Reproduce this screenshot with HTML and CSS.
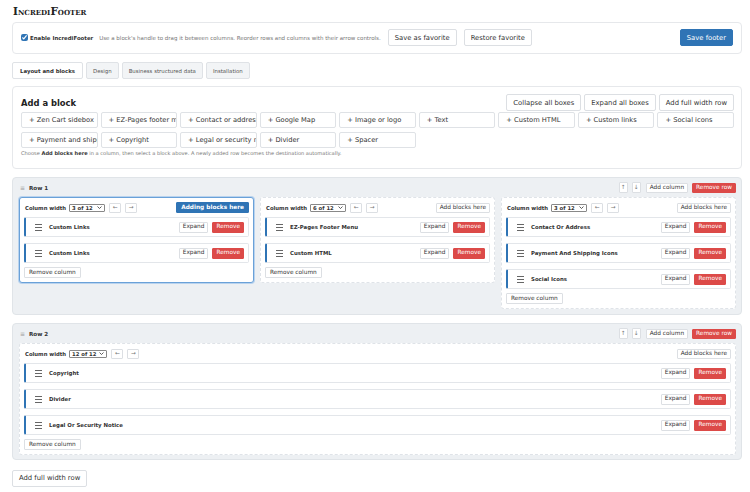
FILE: index.html
```html
<!DOCTYPE html>
<html lang="en">
<head>
  <meta charset="UTF-8">
  <meta name="viewport" content="width=device-width, initial-scale=1.0">
  <title>IncrediFooter</title>
  <link rel="stylesheet" href="styles.css">
</head>
<body>
  <h1 class="title">IncrediFooter</h1>

  <div class="panel toolbar">
    <label class="enable"><input type="checkbox" checked> Enable IncrediFooter</label>
    <span class="hint">Use a block's handle to drag it between columns. Reorder rows and columns with their arrow controls.</span>
    <button class="btn">Save as favorite</button>
    <button class="btn">Restore favorite</button>
    <button class="btn btn-primary push">Save footer</button>
  </div>

  <div class="tabs">
    <button class="tab active">Layout and blocks</button>
    <button class="tab">Design</button>
    <button class="tab">Business structured data</button>
    <button class="tab">Installation</button>
  </div>

  <div class="panel add-panel">
    <div class="add-head">
      <h2>Add a block</h2>
      <div class="actions">
        <button class="btn">Collapse all boxes</button>
        <button class="btn">Expand all boxes</button>
        <button class="btn">Add full width row</button>
      </div>
    </div>
    <div class="block-grid">
      <button class="pick">+ Zen Cart sidebox</button>
      <button class="pick">+ EZ-Pages footer menu</button>
      <button class="pick">+ Contact or address</button>
      <button class="pick">+ Google Map</button>
      <button class="pick">+ Image or logo</button>
      <button class="pick">+ Text</button>
      <button class="pick">+ Custom HTML</button>
      <button class="pick">+ Custom links</button>
      <button class="pick">+ Social icons</button>
      <button class="pick">+ Payment and shipping icons</button>
      <button class="pick">+ Copyright</button>
      <button class="pick">+ Legal or security notice</button>
      <button class="pick">+ Divider</button>
      <button class="pick">+ Spacer</button>
    </div>
    <p class="help">Choose <b>Add blocks here</b> in a column, then select a block above. A newly added row becomes the destination automatically.</p>
  </div>

  <!-- Row 1 -->
  <div class="row-box">
    <div class="row-head">
      <span class="grip">&#8801;</span>
      <b>Row 1</b>
      <div class="row-tools">
        <button class="mini arrow">&uarr;</button>
        <button class="mini arrow">&darr;</button>
        <button class="mini">Add column</button>
        <button class="mini mini-danger">Remove row</button>
      </div>
    </div>
    <div class="cols cols-3">
      <div class="col active">
        <div class="col-head">
          <b>Column width</b>
          <span class="select">3 of 12 <svg width="5" height="3" viewBox="0 0 5 3"><path d="M0.5 0.5 L2.5 2.5 L4.5 0.5" fill="none" stroke="#333" stroke-width="0.8"/></svg></span>
          <button class="mini arrow">&larr;</button>
          <button class="mini arrow">&rarr;</button>
          <button class="mini mini-primary push">Adding blocks here</button>
        </div>
        <div class="block">
          <svg class="handle" width="7" height="7" viewBox="0 0 7 7"><path d="M0 0.5H7M0 3.5H7M0 6.5H7" stroke="#666" stroke-width="1"/></svg>
          <b>Custom Links</b>
          <button class="mini push">Expand</button>
          <button class="mini mini-danger">Remove</button>
        </div>
        <div class="block">
          <svg class="handle" width="7" height="7" viewBox="0 0 7 7"><path d="M0 0.5H7M0 3.5H7M0 6.5H7" stroke="#666" stroke-width="1"/></svg>
          <b>Custom Links</b>
          <button class="mini push">Expand</button>
          <button class="mini mini-danger">Remove</button>
        </div>
        <button class="mini remove-col">Remove column</button>
      </div>

      <div class="col">
        <div class="col-head">
          <b>Column width</b>
          <span class="select">6 of 12 <svg width="5" height="3" viewBox="0 0 5 3"><path d="M0.5 0.5 L2.5 2.5 L4.5 0.5" fill="none" stroke="#333" stroke-width="0.8"/></svg></span>
          <button class="mini arrow">&larr;</button>
          <button class="mini arrow">&rarr;</button>
          <button class="mini push">Add blocks here</button>
        </div>
        <div class="block">
          <svg class="handle" width="7" height="7" viewBox="0 0 7 7"><path d="M0 0.5H7M0 3.5H7M0 6.5H7" stroke="#666" stroke-width="1"/></svg>
          <b>EZ-Pages Footer Menu</b>
          <button class="mini push">Expand</button>
          <button class="mini mini-danger">Remove</button>
        </div>
        <div class="block">
          <svg class="handle" width="7" height="7" viewBox="0 0 7 7"><path d="M0 0.5H7M0 3.5H7M0 6.5H7" stroke="#666" stroke-width="1"/></svg>
          <b>Custom HTML</b>
          <button class="mini push">Expand</button>
          <button class="mini mini-danger">Remove</button>
        </div>
        <button class="mini remove-col">Remove column</button>
      </div>

      <div class="col">
        <div class="col-head">
          <b>Column width</b>
          <span class="select">3 of 12 <svg width="5" height="3" viewBox="0 0 5 3"><path d="M0.5 0.5 L2.5 2.5 L4.5 0.5" fill="none" stroke="#333" stroke-width="0.8"/></svg></span>
          <button class="mini arrow">&larr;</button>
          <button class="mini arrow">&rarr;</button>
          <button class="mini push">Add blocks here</button>
        </div>
        <div class="block">
          <svg class="handle" width="7" height="7" viewBox="0 0 7 7"><path d="M0 0.5H7M0 3.5H7M0 6.5H7" stroke="#666" stroke-width="1"/></svg>
          <b>Contact Or Address</b>
          <button class="mini push">Expand</button>
          <button class="mini mini-danger">Remove</button>
        </div>
        <div class="block">
          <svg class="handle" width="7" height="7" viewBox="0 0 7 7"><path d="M0 0.5H7M0 3.5H7M0 6.5H7" stroke="#666" stroke-width="1"/></svg>
          <b>Payment And Shipping Icons</b>
          <button class="mini push">Expand</button>
          <button class="mini mini-danger">Remove</button>
        </div>
        <div class="block">
          <svg class="handle" width="7" height="7" viewBox="0 0 7 7"><path d="M0 0.5H7M0 3.5H7M0 6.5H7" stroke="#666" stroke-width="1"/></svg>
          <b>Social Icons</b>
          <button class="mini push">Expand</button>
          <button class="mini mini-danger">Remove</button>
        </div>
        <button class="mini remove-col">Remove column</button>
      </div>
    </div>
  </div>

  <!-- Row 2 -->
  <div class="row-box">
    <div class="row-head">
      <span class="grip">&#8801;</span>
      <b>Row 2</b>
      <div class="row-tools">
        <button class="mini arrow">&uarr;</button>
        <button class="mini arrow">&darr;</button>
        <button class="mini">Add column</button>
        <button class="mini mini-danger">Remove row</button>
      </div>
    </div>
    <div class="cols">
      <div class="col">
        <div class="col-head">
          <b>Column width</b>
          <span class="select">12 of 12 <svg width="5" height="3" viewBox="0 0 5 3"><path d="M0.5 0.5 L2.5 2.5 L4.5 0.5" fill="none" stroke="#333" stroke-width="0.8"/></svg></span>
          <button class="mini arrow">&larr;</button>
          <button class="mini arrow">&rarr;</button>
          <button class="mini push">Add blocks here</button>
        </div>
        <div class="block">
          <svg class="handle" width="7" height="7" viewBox="0 0 7 7"><path d="M0 0.5H7M0 3.5H7M0 6.5H7" stroke="#666" stroke-width="1"/></svg>
          <b>Copyright</b>
          <button class="mini push">Expand</button>
          <button class="mini mini-danger">Remove</button>
        </div>
        <div class="block">
          <svg class="handle" width="7" height="7" viewBox="0 0 7 7"><path d="M0 0.5H7M0 3.5H7M0 6.5H7" stroke="#666" stroke-width="1"/></svg>
          <b>Divider</b>
          <button class="mini push">Expand</button>
          <button class="mini mini-danger">Remove</button>
        </div>
        <div class="block">
          <svg class="handle" width="7" height="7" viewBox="0 0 7 7"><path d="M0 0.5H7M0 3.5H7M0 6.5H7" stroke="#666" stroke-width="1"/></svg>
          <b>Legal Or Security Notice</b>
          <button class="mini push">Expand</button>
          <button class="mini mini-danger">Remove</button>
        </div>
        <button class="mini remove-col">Remove column</button>
      </div>
    </div>
  </div>

  <button class="btn add-row">Add full width row</button>
</body>
</html>
```

FILE: styles.css
```css
* {
  box-sizing: border-box;
}

body {
  font-family: "DejaVu Sans", Verdana, sans-serif;
  color: #333;
  background-color: #fff;
  margin: 0;
  padding: 4px 8px 0 12px;
}

button {
  font-family: inherit;
  cursor: pointer;
}

.push {
  margin-left: auto;
}

.title {
  font-family: "DejaVu Serif", serif;
  font-variant: small-caps;
  font-size: 10.5px;
  line-height: 14px;
  margin: 0 0 4px 1px;
  color: #222;
}

.panel {
  border: 1px solid #e6e8eb;
  border-radius: 4px;
  background-color: #fff;
}

/* Toolbar */
.toolbar {
  display: flex;
  align-items: center;
  gap: 7px;
  padding: 6px 8px 7px;
}

.enable {
  display: flex;
  align-items: center;
  gap: 2px;
  font-size: 5.4px;
  font-weight: bold;
  color: #333;
}

.enable input {
  width: 7px;
  height: 7px;
  margin: 0;
  accent-color: #2f74b5;
}

.hint {
  font-size: 5.5px;
  color: #777;
  margin-left: -1px;
}

.btn {
  height: 17px;
  padding: 0 6px;
  font-size: 6.8px;
  color: #333;
  background-color: #fff;
  border: 1px solid #dcdfe3;
  border-radius: 2px;
  white-space: nowrap;
}

.btn-primary {
  background-color: #2f74b5;
  border-color: #2f74b5;
  color: #fff;
}

/* Tabs */
.tabs {
  display: flex;
  gap: 3px;
  margin: 8px 0 7px;
}

.tab {
  height: 17px;
  padding: 0 6px;
  font-size: 5.4px;
  color: #555;
  background-color: #f2f4f6;
  border: 1px solid #dfe2e6;
  border-radius: 2px;
}

.tab.active {
  background-color: #fff;
  font-weight: bold;
  color: #333;
  padding: 0 7px;
}

/* Add a block */
.add-panel {
  padding: 7px 7px 0 7px;
}

.add-head {
  display: flex;
  align-items: center;
  justify-content: space-between;
  margin-bottom: 1px;
}

.add-head h2 {
  font-size: 8.4px;
  margin: 0 0 0 1px;
  color: #222;
}

.actions {
  display: flex;
  gap: 3px;
}

.block-grid {
  display: grid;
  grid-template-columns: repeat(9, 1fr);
  gap: 4px 3px;
  margin-left: 1px;
}

.pick {
  height: 16px;
  padding: 0 7px;
  font-size: 6.7px;
  text-align: left;
  color: #333;
  background-color: #fff;
  border: 1px solid #dfe2e6;
  border-radius: 2px;
  white-space: nowrap;
  overflow: hidden;
  min-width: 0;
}

.help {
  font-size: 5.1px;
  line-height: 8px;
  color: #777;
  margin: 1px 0 0 1px;
  padding-bottom: 11px;
}

.help b {
  color: #333;
}

/* Rows */
.row-box {
  background-color: #edf0f3;
  border: 1px solid #e0e4e8;
  border-radius: 4px;
  padding: 4px 5px 5px 6px;
  margin: 8px 0 6px;
}

.row-head {
  display: flex;
  align-items: center;
  height: 11px;
  margin-bottom: 4px;
  font-size: 5.6px;
}

.grip {
  color: #999;
  font-size: 6px;
  margin: 0 4px 0 1px;
}

.row-tools {
  display: flex;
  align-items: center;
  gap: 4px;
  margin-left: auto;
}

.row-tools .mini:nth-child(3) {
  margin-left: 1px;
}

.cols {
  display: grid;
  grid-template-columns: 1fr;
  gap: 6px;
  align-items: start;
}

.cols-3 {
  grid-template-columns: repeat(3, 1fr);
}

.col {
  display: flex;
  flex-direction: column;
  align-items: stretch;
  background-color: #fff;
  border: 1px dashed #dfe3e8;
  border-radius: 3px;
  padding: 4px;
}

.col.active {
  border: 1px solid #6aa1d8;
  box-shadow: 0 0 0 1px #b9d3ee;
}

.col-head {
  display: flex;
  align-items: center;
  height: 11px;
  margin-bottom: 4px;
  font-size: 5.3px;
}

.col-head b {
  margin-left: 1px;
}

.select {
  display: inline-flex;
  align-items: center;
  justify-content: space-between;
  gap: 3px;
  height: 8px;
  padding: 0 2px;
  margin-left: 3px;
  border: 1px solid #888;
  border-radius: 1px;
  font-weight: bold;
  font-size: 5.3px;
  min-width: 36px;
}

.col-head .arrow {
  margin-left: 4px;
}

.mini {
  height: 10px;
  padding: 0 3px;
  font-size: 5.8px;
  line-height: 1;
  color: #333;
  background-color: #fff;
  border: 1px solid #dcdfe3;
  border-radius: 1px;
  white-space: nowrap;
}

.mini.arrow {
  width: 12px;
  padding: 0;
  color: #777;
}

.row-tools .mini.arrow {
  width: 9px;
  height: 11px;
}

.mini-danger {
  background-color: #dc4a48;
  border-color: #dc4a48;
  color: #fff;
}

.mini-primary {
  background-color: #2f74b5;
  border-color: #2f74b5;
  color: #fff;
  font-weight: bold;
  padding: 0 4px;
  height: 11px;
}

.block {
  display: flex;
  align-items: center;
  gap: 4px;
  height: 20px;
  padding: 0 4px 0 9px;
  margin-bottom: 6px;
  background-color: #fff;
  border: 1px solid #e3e6ea;
  border-left: 2px solid #2f74b5;
  border-radius: 2px;
  font-size: 5.4px;
}

.block:last-of-type {
  margin-bottom: 4px;
}

.handle {
  margin-right: 3px;
}

.block .mini {
  height: 11px;
}

.remove-col {
  align-self: flex-start;
  height: 11px;
  padding: 0 4px;
}

.row-box:last-of-type {
  padding-bottom: 4px;
  margin-bottom: 5px;
}
```
